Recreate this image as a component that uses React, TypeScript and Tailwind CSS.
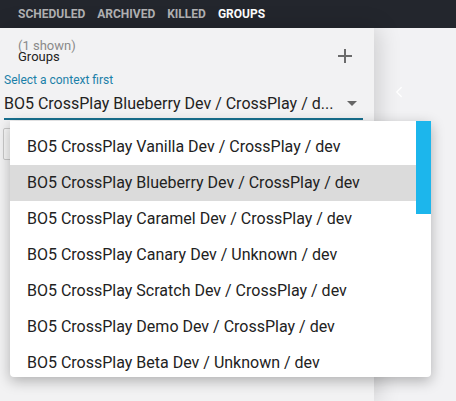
import { ChevronLeft } from "lucide-react";

const TABS = ["Scheduled", "Archived", "Killed", "Groups"];

const OPTIONS = [
  "BO5 CrossPlay Vanilla Dev / CrossPlay / dev",
  "BO5 CrossPlay Blueberry Dev / CrossPlay / dev",
  "BO5 CrossPlay Caramel Dev / CrossPlay / dev",
  "BO5 CrossPlay Canary Dev / Unknown / dev",
  "BO5 CrossPlay Scratch Dev / CrossPlay / dev",
  "BO5 CrossPlay Demo Dev / CrossPlay / dev",
  "BO5 CrossPlay Beta Dev / Unknown / dev",
];

export default function App() {
  return (
    <div
      className="relative w-[456px] h-[401px] overflow-hidden flex flex-col bg-[#f2f2f4]"
      style={{ fontFamily: "Roboto, 'Liberation Sans', sans-serif" }}
    >
      {/* top nav */}
      <div className="h-[28px] shrink-0 bg-[#23262d] flex items-center gap-[12px] pl-[18px]">
        {TABS.map((t) => (
          <span
            key={t}
            className={`uppercase font-bold text-[12px] leading-none ${
              t === "Groups" ? "text-white" : "text-[#b2b2b4]"
            }`}
          >
            {t}
          </span>
        ))}
      </div>

      <div className="flex flex-1">
        {/* left panel */}
        <div className="w-[374px] shrink-0 bg-[#f2f2f3] relative z-10 shadow-[4px_0_22px_rgba(0,0,0,0.16)]">
          <div className="flex items-center justify-between pl-[18px] pr-[22px] pt-[11px]">
            <div>
              <div className="text-[13px] leading-[13px] text-[#8a8a8a]">(1 shown)</div>
              <div className="text-[13px] leading-[13px] text-[#222] -mt-[2px]">Groups</div>
            </div>
            <svg width="14" height="14" viewBox="0 0 14 14" className="mt-[10px]">
              <path d="M7 0v14M0 7h14" stroke="#6b6b6b" strokeWidth="2" />
            </svg>
          </div>

          <div className="ml-[4px] mt-[10px] text-[12px] leading-[14px] text-[#1b80a8]">
            Select a context first
          </div>

          <div className="ml-[4px] w-[359px] mt-[7px] pb-[5px] border-b-2 border-[#18708f] flex items-center justify-between pr-[6px]">
            <span className="text-[16px] leading-[19px] text-[#222] truncate">
              BO5 CrossPlay Blueberry Dev / CrossPlay / d...
            </span>
            <svg width="10" height="5" viewBox="0 0 10 5" className="shrink-0 ml-[12px]">
              <path d="M0 0h10L5 5z" fill="#666" />
            </svg>
          </div>

          <div className="ml-[3px] mt-[8px] w-[60px] h-[32px] border border-[#c8c8c8] rounded-[2px] bg-[#f6f6f6]" />
        </div>

        {/* right area */}
        <div className="flex-1 relative">
          <ChevronLeft
            className="absolute left-[16px] top-[55px] text-white"
            size={18}
            strokeWidth={1.75}
          />
        </div>
      </div>

      {/* open dropdown */}
      <div className="absolute z-20 left-[10px] top-[121px] w-[421px] h-[256px] bg-white rounded-b-[4px] overflow-hidden shadow-[0_4px_14px_rgba(0,0,0,0.28)]">
        <div className="pt-[8px] mr-[15px]">
          {OPTIONS.map((o, i) => (
            <div
              key={o}
              className={`h-[36px] flex items-center pl-[17px] text-[16px] text-[#222] ${
                i === 1 ? "bg-[#dbdbdb]" : ""
              }`}
            >
              {o}
            </div>
          ))}
        </div>
        <div className="absolute right-0 top-0 w-[15px] h-[93px] bg-[#1cb6ec]" />
      </div>
    </div>
  );
}
